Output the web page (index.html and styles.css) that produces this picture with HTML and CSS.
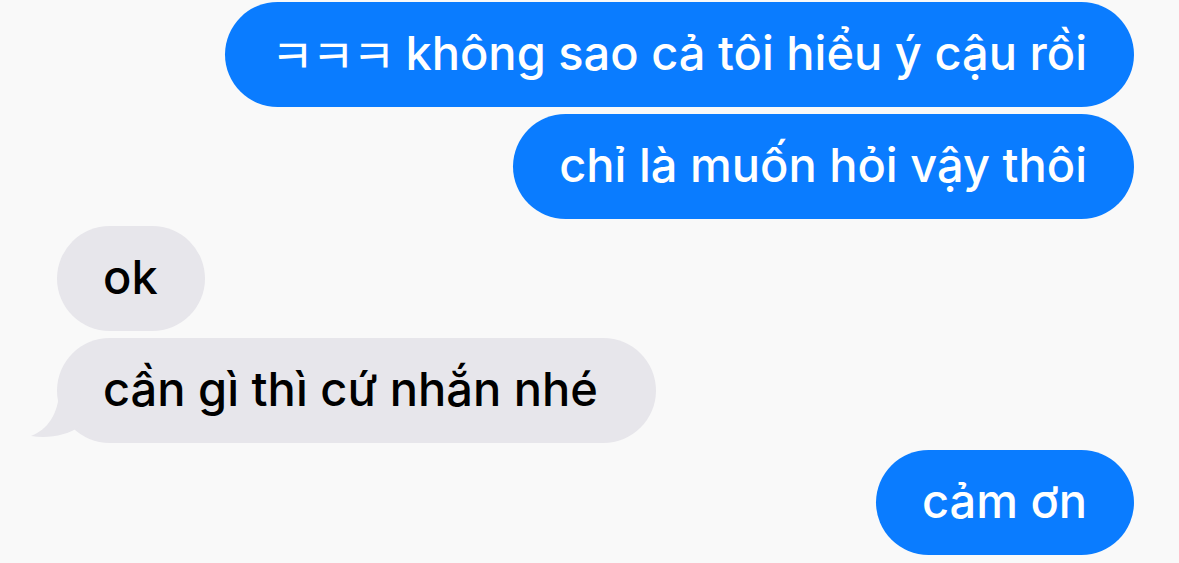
FILE: index.html
```html
<!DOCTYPE html>
<html lang="vi">
<head>
  <meta charset="utf-8">
  <title>Tin nhắn</title>
  <link rel="stylesheet" href="styles.css">
</head>
<body>
  <main class="chat">
    <div class="bubble bubble_out"><span class="bubble__laugh" lang="ko">ㅋㅋㅋ</span>&nbsp;không sao cả tôi hiểu ý cậu rồi</div>
    <div class="bubble bubble_out">chỉ là muốn hỏi vậy thôi</div>
    <div class="bubble bubble_in">ok</div>
    <div class="bubble bubble_in bubble_tail">
      cần gì thì cứ nhắn nhé
      <svg class="bubble__tail" viewBox="0 0 52 50" aria-hidden="true">
        <path d="M30 0 C30 24 18 40 2 46 C20 49 38 45 50 37 L52 0 Z"/>
      </svg>
    </div>
    <div class="bubble bubble_out">cảm ơn</div>
  </main>
</body>
</html>
```

FILE: styles.css
```css
*,
*::before,
*::after {
  box-sizing: border-box;
  margin: 0;
  padding: 0;
}

body {
  min-height: 100vh;
  background-color: #f9f9f9;
  font-family: "Inter", "Noto Sans CJK KR", sans-serif;
  font-size: 47px;
  font-weight: 500;
}

.chat {
  display: flex;
  flex-direction: column;
  gap: 7px;
  padding: 2px 45px 0 57px;
}

.bubble {
  position: relative;
  display: flex;
  align-items: center;
  height: 105px;
  padding: 0 47px 4px 46px;
  border-radius: 53px;
  white-space: nowrap;
}

.bubble__laugh {
  font-weight: 400;
  letter-spacing: -2.5px;
}

.bubble_out {
  align-self: flex-end;
  color: #ffffff;
  background-color: #0a7cff;
}

.bubble_in {
  align-self: flex-start;
  color: #000000;
  background-color: #e7e6eb;
}

.bubble_tail {
  padding-right: 58px;
}

.bubble__tail {
  position: absolute;
  left: -28px;
  bottom: 3px;
  width: 52px;
  height: 50px;
  fill: #e7e6eb;
}
```
